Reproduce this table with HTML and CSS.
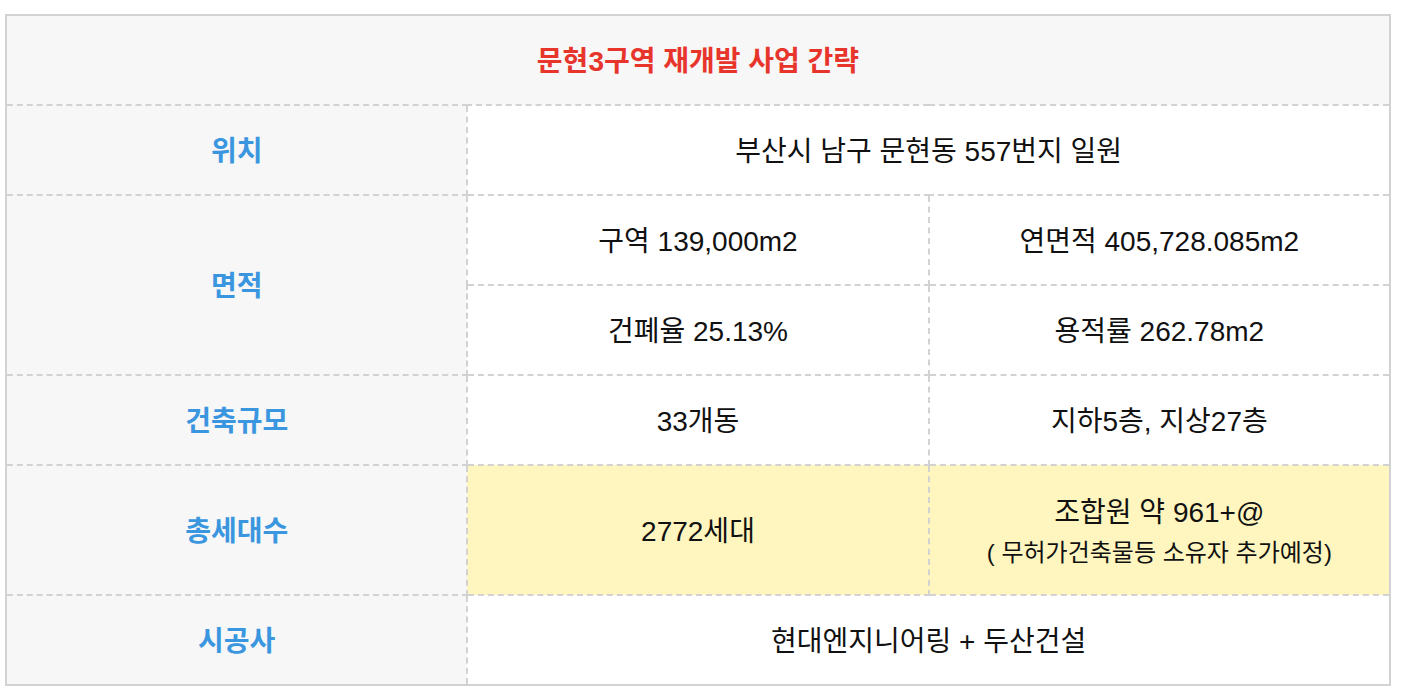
FILE: index.html
```html
<!DOCTYPE html>
<html lang="ko">
<head>
<meta charset="utf-8">
<title>문현3구역 재개발 사업 간략</title>
<link rel="stylesheet" href="styles.css">
</head>
<body>
<table class="summary">
  <colgroup><col class="c1"><col class="c2"><col class="c3"></colgroup>
  <tr class="row-head">
    <th colspan="3" class="title">문현3구역 재개발 사업 간략</th>
  </tr>
  <tr class="row">
    <th class="label">위치</th>
    <td colspan="2">부산시 남구 문현동 557번지 일원</td>
  </tr>
  <tr class="row">
    <th class="label" rowspan="2">면적</th>
    <td>구역 139,000m2</td>
    <td>연면적 405,728.085m2</td>
  </tr>
  <tr class="row">
    <td>건폐율 25.13%</td>
    <td>용적률 262.78m2</td>
  </tr>
  <tr class="row">
    <th class="label">건축규모</th>
    <td>33개동</td>
    <td>지하5층, 지상27층</td>
  </tr>
  <tr class="row-tall">
    <th class="label">총세대수</th>
    <td class="hl">2772세대</td>
    <td class="hl"><div>조합원 약 961+@</div><div class="sub">( 무허가건축물등 소유자 추가예정)</div></td>
  </tr>
  <tr class="row">
    <th class="label">시공사</th>
    <td colspan="2">현대엔지니어링 + 두산건설</td>
  </tr>
</table>
</body>
</html>
```

FILE: styles.css
```css
html, body {
  margin: 0;
  padding: 0;
  background: #ffffff;
}
body {
  padding: 14px 0 0 5px;
  font-family: "Liberation Sans", "Noto Sans CJK KR", sans-serif;
  color: #111111;
}
.summary {
  border-collapse: collapse;
  width: 1386px;
  border: 2px solid #d2d2d2;
  table-layout: fixed;
}
.summary th, .summary td {
  border: 2px dashed #d2d2d2;
  text-align: center;
  vertical-align: middle;
  padding: 4px 0 0;
  font-size: 28px;
  font-weight: normal;
  line-height: 1.2;
}
.row-head th, .row th, .row td { height: 84px; }
.row-tall th, .row-tall td { height: 124px; }
.title {
  background: #f7f7f7;
  color: #e8352c;
  font-weight: bold !important;
  font-size: 28px !important;
  border-top: 2px solid #d2d2d2 !important;
}
.label {
  background: #f7f7f7;
  color: #3b96e0;
  font-weight: bold !important;
  font-size: 28px !important;
  border-left: 2px solid #d2d2d2 !important;
}
.hl { background: #fff6bf; }
.hl .sub { font-size: 24px; margin-top: 10px; }
```
